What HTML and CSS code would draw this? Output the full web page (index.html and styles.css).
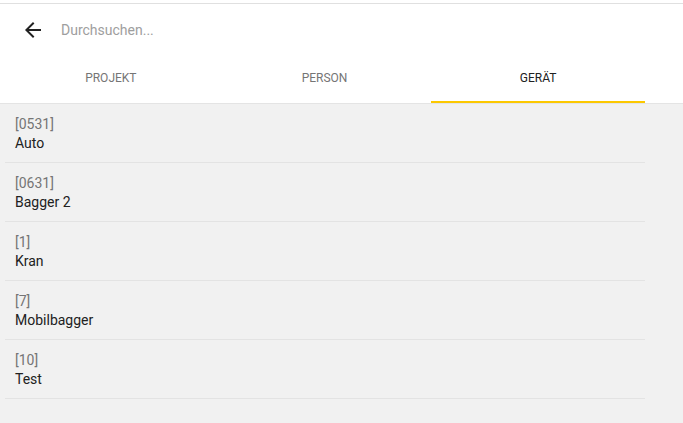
FILE: index.html
```html
<!DOCTYPE html>
<html>
<head>
<meta charset="utf-8">
<link rel="stylesheet" href="styles.css">
</head>
<body>
<div class="page">
  <header class="header">
    <div class="search-row">
      <button class="back" aria-label="Zurück">
        <svg width="24" height="24" viewBox="0 0 24 24"><path d="M20 11H7.83l5.59-5.59L12 4l-8 8 8 8 1.41-1.41L7.83 13H20v-2z" fill="#212121"/></svg>
      </button>
      <input class="search" type="text" placeholder="Durchsuchen...">
    </div>
    <nav class="tabs">
      <div class="tab">Projekt</div>
      <div class="tab">Person</div>
      <div class="tab active">Gerät</div>
    </nav>
  </header>
  <ul class="list">
    <li class="item"><div class="code">[0531]</div><div class="name">Auto</div></li>
    <li class="item"><div class="code">[0631]</div><div class="name">Bagger 2</div></li>
    <li class="item"><div class="code">[1]</div><div class="name">Kran</div></li>
    <li class="item"><div class="code">[7]</div><div class="name">Mobilbagger</div></li>
    <li class="item"><div class="code">[10]</div><div class="name">Test</div></li>
  </ul>
</div>
</body>
</html>
```
FILE: styles.css
```css
html, body {
  margin: 0;
  padding: 0;
  height: 100%;
}
body {
  font-family: Roboto, "Liberation Sans", sans-serif;
  background: #f1f1f1;
  color: #212121;
}
.page {
  min-height: 100%;
}
.header {
  background: #fff;
  padding-top: 3px;
  border-bottom: 1px solid #e4e4e4;
}
.search-row {
  border-top: 1px solid #e0e0e0;
  height: 51px;
  display: flex;
  align-items: center;
  padding-left: 21px;
}
.back {
  width: 24px;
  height: 24px;
  padding: 0;
  border: 0;
  background: none;
  display: flex;
}
.search {
  margin-left: 16px;
  border: 0;
  outline: none;
  font-family: inherit;
  font-size: 14px;
  color: #212121;
  background: transparent;
  padding: 0;
  width: 300px;
}
.search::placeholder {
  color: #9e9e9e;
}
.tabs {
  display: flex;
  margin-left: 4px;
  width: 641px;
  height: 48px;
}
.tab {
  flex: 1;
  display: flex;
  align-items: center;
  justify-content: center;
  text-transform: uppercase;
  font-size: 12px;
  color: #757575;
  box-sizing: border-box;
  padding-bottom: 2px;
}
.tab.active {
  color: #212121;
  border-bottom: 2px solid #fcc800;
  padding-bottom: 0;
}
.list {
  list-style: none;
  margin: 0 0 0 5px;
  padding: 0;
  width: 640px;
}
.item {
  padding: 11px 10px 9px;
  border-bottom: 1px solid #e3e3e3;
  font-size: 14px;
  line-height: 19px;
}
.code {
  color: #757575;
}
.name {
  color: #212121;
}
```
